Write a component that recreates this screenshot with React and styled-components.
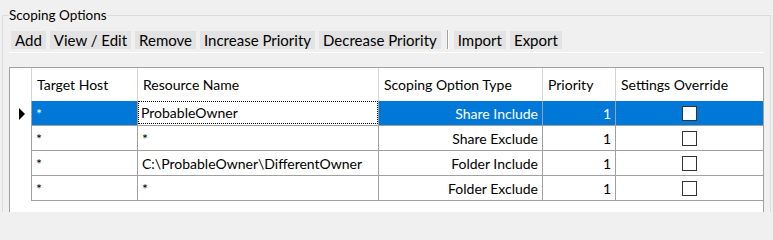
import styled, { createGlobalStyle } from "styled-components";

const GlobalStyle = createGlobalStyle`
  html, body {
    margin: 0;
    padding: 0;
    height: 212px;
    overflow: hidden;
    background: #f0f0f0;
  }
  body {
    font-family: Lato, "Noto Sans", sans-serif;
    font-size: 14px;
    color: #000;
  }
`;

const Page = styled.div`
  height: 212px;
  overflow: hidden;
  padding-top: 6px;
  box-sizing: border-box;
`;

const Group = styled.fieldset`
  margin: 0 0 0 2px;
  width: 769px;
  height: 240px;
  box-sizing: border-box;
  padding: 0 6px;
  border: 1px solid #dcdcdc;
`;

const Legend = styled.legend`
  padding: 0;
  font-size: 13.5px;
  line-height: 18px;
`;

const Toolbar = styled.div`
  display: flex;
  align-items: center;
  gap: 4px;
  padding: 6px 2px 3px;
  border-bottom: 1px solid #fff;
`;

const ToolButton = styled.button`
  font: inherit;
  font-size: 15px;
  color: #000;
  height: 18px;
  line-height: 18px;
  padding: 0 4px;
  margin: 0;
  border: 0;
  background: #e3e3e3;
`;

const Separator = styled.span`
  width: 1px;
  height: 19px;
  margin: 0 2px;
  background: #a0a0a0;
  box-shadow: 1px 0 0 #fff;
`;

const Grid = styled.div`
  margin-top: 14px;
  height: 200px;
  background: #fff;
  border: 1px solid #a0a0a0;
`;

const Row = styled.div`
  display: grid;
  grid-template-columns: 22px 106px 241px 164px 73px 147px;
  height: ${(p) => (p.$header ? 33 : 25)}px;
`;

const HeaderCell = styled.div`
  display: flex;
  align-items: center;
  padding-left: 5px;
  border-right: ${(p) => (p.$last ? "0" : "1px solid #d5d5d5")};
  white-space: nowrap;
  overflow: hidden;
`;

const RowHeader = styled.div`
  display: flex;
  align-items: center;
  justify-content: center;
  border-right: 1px solid #a0a0a0;
`;

const Arrow = styled.span`
  width: 0;
  height: 0;
  margin-left: 2px;
  border-top: 6px solid transparent;
  border-bottom: 6px solid transparent;
  border-left: 6px solid #000;
`;

const Cell = styled.div`
  display: flex;
  align-items: center;
  justify-content: ${(p) =>
    p.$align === "right" ? "flex-end" : p.$align === "center" ? "center" : "flex-start"};
  padding: ${(p) => (p.$focused ? "0" : "0 4px")};
  border-bottom: 1px solid #a0a0a0;
  border-right: ${(p) => (p.$last ? "0" : "1px solid #a0a0a0")};
  background: ${(p) => (p.$selected && !p.$focused ? "#0078d7" : "#fff")};
  color: ${(p) => (p.$selected && !p.$focused ? "#fff" : "#000")};
  white-space: nowrap;
  overflow: hidden;
`;

const FocusBox = styled.div`
  box-sizing: border-box;
  align-self: stretch;
  flex: 1;
  display: flex;
  align-items: center;
  padding-left: 2px;
  margin-bottom: 1px;
  border: 1px dotted #000;
`;

const CheckBox = styled.span`
  box-sizing: border-box;
  width: 15px;
  height: 15px;
  background: #fff;
  border: 1px solid #333;
`;

const buttons = ["Add", "View / Edit", "Remove", "Increase Priority", "Decrease Priority"];
const buttons2 = ["Import", "Export"];

const columns = [
  "Target Host",
  "Resource Name",
  "Scoping Option Type",
  "Priority",
  "Settings Override",
];

const rows = [
  { host: "*", resource: "ProbableOwner", type: "Share Include", priority: 1 },
  { host: "*", resource: "*", type: "Share Exclude", priority: 1 },
  { host: "*", resource: "C:\\ProbableOwner\\DifferentOwner", type: "Folder Include", priority: 1 },
  { host: "*", resource: "*", type: "Folder Exclude", priority: 1 },
];

export default function App() {
  return (
    <Page>
      <GlobalStyle />
      <Group>
        <Legend>Scoping Options</Legend>
        <Toolbar>
          {buttons.map((b) => (
            <ToolButton key={b}>{b}</ToolButton>
          ))}
          <Separator />
          {buttons2.map((b) => (
            <ToolButton key={b}>{b}</ToolButton>
          ))}
        </Toolbar>
        <Grid>
          <Row $header>
            <HeaderCell />
            {columns.map((c, i) => (
              <HeaderCell key={c} $last={i === columns.length - 1}>
                {c}
              </HeaderCell>
            ))}
          </Row>
          {rows.map((r, i) => {
            const selected = i === 0;
            return (
              <Row key={i}>
                <RowHeader>{selected ? <Arrow /> : null}</RowHeader>
                <Cell $selected={selected}>{r.host}</Cell>
                <Cell $selected={selected} $focused={selected}>
                  {selected ? <FocusBox>{r.resource}</FocusBox> : r.resource}
                </Cell>
                <Cell $selected={selected} $align="right">
                  {r.type}
                </Cell>
                <Cell $selected={selected} $align="right">
                  {r.priority}
                </Cell>
                <Cell $selected={selected} $align="center" $last>
                  <CheckBox />
                </Cell>
              </Row>
            );
          })}
        </Grid>
      </Group>
    </Page>
  );
}
